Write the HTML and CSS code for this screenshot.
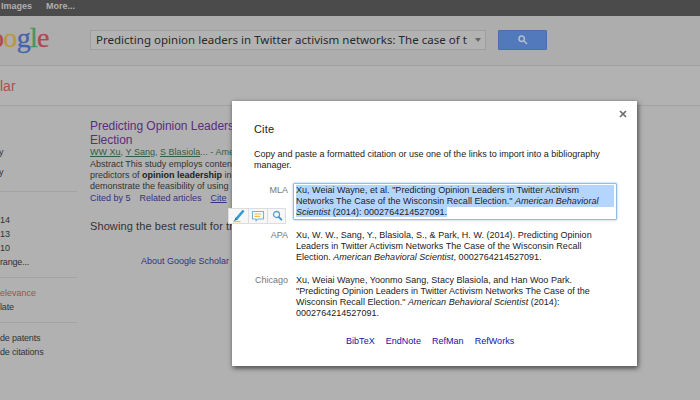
FILE: index.html
```html
<!DOCTYPE html>
<html lang="en">
<head>
<meta charset="utf-8">
<title>Google Scholar</title>
<link rel="stylesheet" href="styles.css">
</head>
<body>
<nav class="topbar"><span>Images</span><span>More...</span></nav>
<header class="header">
  <div class="logo"><span class="red">o</span><span class="yellow">o</span><span class="blue">g</span><span class="green">l</span><span class="red">e</span></div>
  <div class="search"><span class="query">Predicting opinion leaders in Twitter activism networks: The case of t</span><i class="caret"></i></div>
  <button class="search-btn" aria-label="Search"><svg width="10" height="10" viewBox="0 0 10 10"><circle cx="3.7" cy="3.7" r="2.7"/><path d="M5.8 5.8L9 9"/></svg></button>
</header>
<div class="subheader">lar</div>
<div class="content">
  <aside class="sidebar">
    <div class="group articles"><p>y</p><p>y</p></div>
    <div class="group years"><p>14</p><p>13</p><p>10</p><p class="tight">range...</p></div>
    <div class="group sort"><p class="active">elevance</p><p class="tight">late</p></div>
    <div class="group include"><p class="tight">de patents</p><p class="tight">de citations</p></div>
  </aside>
  <main class="results">
    <h3>Predicting Opinion Leaders<br>Election</h3>
    <p class="authors"><u>WW Xu</u>, <u>Y Sang</u>, <u>S Blasiola</u>... - American</p>
    <p class="abstract">Abstract This study employs content<br>predictors of <b>opinion leadership</b> in<br>demonstrate the feasibility of using</p>
    <p class="links"><a>Cited by 5</a><a>Related articles</a><a class="cite">Cite</a></p>
    <p class="best">Showing the best result for this</p>
    <p class="about">About Google Scholar</p>
  </main>
</div>
<section class="dialog">
  <svg class="close" width="8" height="8" viewBox="0 0 8 8"><path d="M1 1L7 7M7 1L1 7"/></svg>
  <h2>Cite</h2>
  <p class="intro">Copy and paste a formatted citation or use one of the links to import into a bibliography<br>manager.</p>
  <div class="citations">
    <div class="label">MLA</div>
    <div class="citation selected"><div class="hl">Xu, Weiai Wayne, et al. "Predicting Opinion Leaders in Twitter Activism</div><div class="hl">Networks The Case of the Wisconsin Recall Election." <em>American Behavioral</em></div><div><span class="hl"><em>Scientist</em> (2014): 0002764214527091.</span></div></div>
    <div class="label">APA</div>
    <div class="citation">Xu, W. W., Sang, Y., Blasiola, S., &amp; Park, H. W. (2014). Predicting Opinion<br>Leaders in Twitter Activism Networks The Case of the Wisconsin Recall<br>Election. <em>American Behavioral Scientist</em>, 0002764214527091.</div>
    <div class="label">Chicago</div>
    <div class="citation">Xu, Weiai Wayne, Yoonmo Sang, Stacy Blasiola, and Han Woo Park.<br>"Predicting Opinion Leaders in Twitter Activism Networks The Case of the<br>Wisconsin Recall Election." <em>American Behavioral Scientist</em> (2014):<br>0002764214527091.</div>
  </div>
  <div class="exports"><a>BibTeX</a><a>EndNote</a><a>RefMan</a><a>RefWorks</a></div>
</section>
<div class="tools">
  <span><svg width="14" height="14" viewBox="0 0 14 14"><path d="M1 12.6H8.5" stroke="#f7bd50" stroke-width="1.3"/><path d="M11.6 1.5L4.4 9.8" stroke="#369bd5" stroke-width="2.6"/><path d="M3.5 8.5L2 12.2L5.6 10.4Z" fill="#267bac"/></svg></span>
  <span><svg width="14" height="14" viewBox="0 0 14 14"><path d="M1.5 2.5H12.5V10H6.7L5 12V10H1.5Z" fill="#fff" stroke="#70b3dc" stroke-width="1.1" stroke-linejoin="round"/><path d="M3.5 5H10.5M3.5 7.4H9" stroke="#f6b948" stroke-width="1.2"/></svg></span>
  <span><svg width="14" height="14" viewBox="0 0 14 14"><circle cx="5.5" cy="5.5" r="3" fill="none" stroke="#4fa4d7" stroke-width="1.3"/><path d="M7.7 7.8L10.9 11.2" stroke="#368fc5" stroke-width="1.7"/></svg></span>
</div>
</body>
</html>
```
FILE: styles.css
```css
* { box-sizing: border-box; }
body { margin: 0; width: 700px; height: 400px; overflow: hidden; position: relative; background: #b1b1b1; color: #333; font: 9px/11px "Liberation Sans", Arial, sans-serif; white-space: nowrap; }
p, h2, h3 { margin: 0; font-weight: normal; }
.topbar { height: 16px; background: #4b4b4b; color: #b0b0b0; font-weight: bold; line-height: 12px; display: flex; gap: 14px; padding-left: 1px; }
.header { height: 50px; background: #adadad; border-bottom: 1px solid #a2a2a2; display: flex; align-items: flex-start; }
.logo { width: 90px; height: 49px; margin-left: -10px; font: 28px/44px "Liberation Serif", serif; letter-spacing: -0.7px; flex: none; -webkit-text-stroke: 0.3px; }
.red { color: #b34750; }
.yellow { color: #bd953c; }
.blue { color: #4463ae; }
.green { color: #46955a; }
.search { margin: 14px 0 0 10px; width: 396px; height: 20px; border: 1px solid #9f9f9f; background: #b2b2b2; display: flex; align-items: center; padding: 0 4px 0 5px; justify-content: space-between; }
.query { font: 11.5px/18px "Noto Sans", sans-serif; letter-spacing: 0.015px; color: #292929; }
.caret { border: 3px solid transparent; border-top: 4px solid #666; border-bottom: 0; }
.search-btn { margin: 14px 0 0 12px; width: 49px; height: 20px; border: 1px solid #486fae; border-radius: 1px; background: #5279bb; padding: 0; display: flex; align-items: center; justify-content: center; }
.search-btn svg { fill: none; stroke: #b5bfd0; stroke-width: 1.5; }
.subheader { height: 40px; border-bottom: 1px solid #a2a2a2; background: #b2b2b2; color: #ad514b; font-size: 14px; line-height: 40px; }
.content { display: flex; }
.sidebar { width: 77px; line-height: 14px; }
.group { border-bottom: 1px solid #a4a4a4; }
.group:last-child { border: 0; }
.group .tight { letter-spacing: -0.17px; }
.articles { height: 86px; padding-top: 36px; line-height: 20px; }
.articles p { margin-left: -1px; }
.years { height: 86px; padding-top: 21px; }
.sort { height: 45px; padding-top: 8px; }
.include { padding-top: 8px; }
.active { color: #aa4c47; }
.results { margin-left: 13px; padding-top: 14px; }
h3 { font-size: 12px; line-height: 13.5px; color: #5b2d7c; letter-spacing: -0.03px; }
.authors { color: #315e40; letter-spacing: 0.02px; }
.abstract { margin-top: 1px; }
.abstract b { color: #222; }
.links { display: flex; gap: 9px; color: #352f86; margin-top: 1px; }
.cite { text-decoration: underline; }
.best { font-size: 11px; letter-spacing: 0.1px; line-height: 13px; margin-top: 16px; }
.about { color: #352f86; margin: 23px 0 0 51px; }
.dialog { position: absolute; left: 232px; top: 101px; width: 405px; height: 265px; background: #fff; box-shadow: 0 0 1px #888, 1px 2px 5px rgba(0,0,0,.65); padding: 22px; color: #222; }
.close { position: absolute; left: 387px; top: 9px; fill: none; stroke: #6d6d6d; stroke-width: 1.7; }
h2 { font-size: 11px; line-height: 12px; letter-spacing: 0.15px; }
.intro { margin-top: 14px; }
.citations { display: grid; grid-template-columns: 34px 324px; column-gap: 5px; margin-top: 12px; align-items: start; }
.label { text-align: right; color: #777; padding-top: 2px; }
.citation { padding: 2px 3px 9.5px; letter-spacing: 0.025px; }
.citation.selected { border: 1px solid #91bee8; border-radius: 1px; box-shadow: 0 0 2px #78aee0; padding: 1px 2px; margin-bottom: 8px; }
.hl { background: #b4d5fe; }
.exports { display: flex; gap: 11px; margin: 8px 0 0 92px; color: #1a0dab; letter-spacing: 0.03px; }
.tools { position: absolute; left: 228px; top: 208px; height: 16px; width: 58px; display: grid; grid-template-columns: 20px 19px 19px; background: #f7f7f7; border: 1px solid #ddd; }
.tools span { display: flex; align-items: center; justify-content: center; border-right: 1px solid #ddd; }
.tools span:last-child { border: 0; }
```
